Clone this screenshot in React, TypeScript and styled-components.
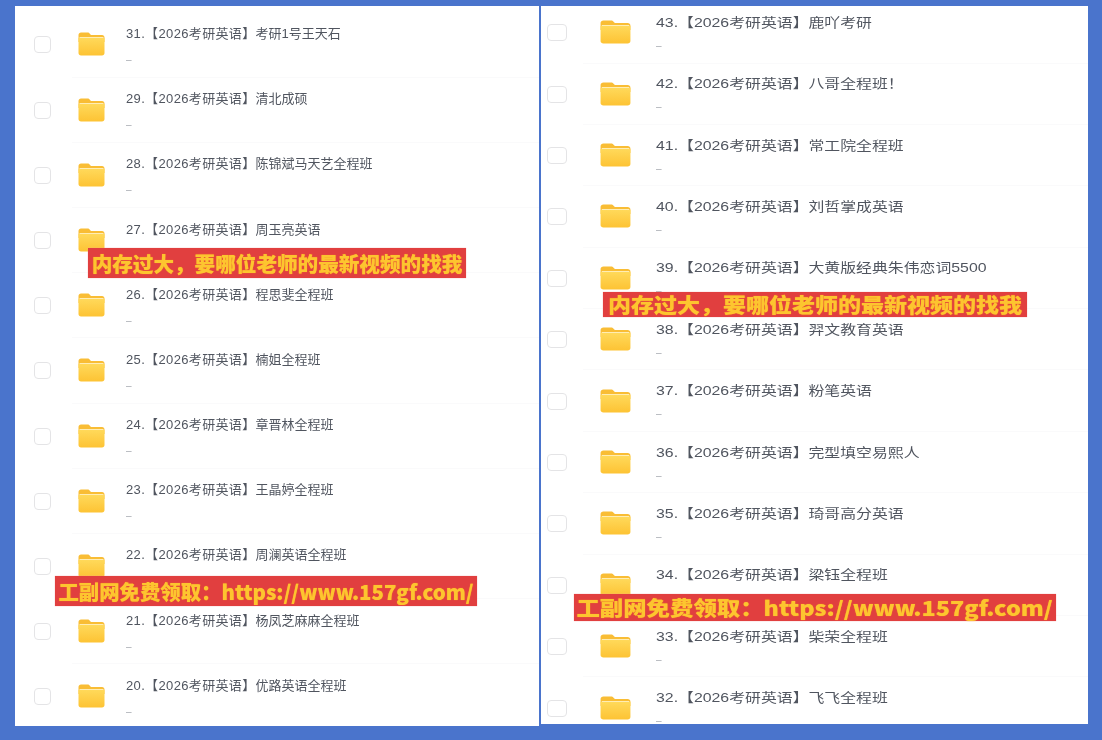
import React from "react";
import styled, { createGlobalStyle } from "styled-components";

const Global = createGlobalStyle`
  html, body { margin: 0; padding: 0; background: #4a74cc; }
  #root { width: 1102px; height: 740px; }
`;

const Page = styled.div`
  position: relative;
  width: 1102px;
  height: 740px;
  overflow: hidden;
  background: #4a74cc;
  display: flex;
  align-items: flex-start;
  gap: 2px;
  padding: 6px 0 0 15px;
  box-sizing: border-box;
  font-family: "Liberation Sans", "Noto Sans CJK SC", sans-serif;
`;

const Panel = styled.section<{ $wide?: boolean }>`
  width: ${(p) => (p.$wide ? 547 : 524)}px;
  height: ${(p) => (p.$wide ? 718 : 720)}px;
  background: #fff;
  overflow: hidden;
  flex: none;
`;

const List = styled.ul<{ $wide?: boolean }>`
  list-style: none;
  margin: ${(p) => (p.$wide ? "-3.9px" : "6.4px")} 0 0;
  padding: 0;
  filter: blur(0.55px);
`;

const Row = styled.li<{ $wide?: boolean }>`
  height: ${(p) => (p.$wide ? 61.4 : 65.2)}px;
  display: flex;
  align-items: center;
  padding-left: ${(p) => (p.$wide ? 6 : 19)}px;
  box-sizing: border-box;
`;

const Check = styled.span<{ $wide?: boolean }>`
  flex: none;
  width: ${(p) => (p.$wide ? 20 : 17)}px;
  height: 17px;
  border: 1px solid #e4e4e6;
  border-radius: 4px;
  box-sizing: border-box;
  background: #fff;
`;

const Body = styled.div<{ $wide?: boolean }>`
  flex: 1;
  height: 100%;
  margin-left: ${(p) => (p.$wide ? 16 : 21)}px;
  padding-left: ${(p) => (p.$wide ? 17 : 6)}px;
  display: flex;
  align-items: center;
  gap: ${(p) => (p.$wide ? 25 : 21)}px;
  border-bottom: 1px solid #fafafb;
  box-sizing: border-box;
`;

const FolderIcon = styled.svg<{ $wide?: boolean }>`
  flex: none;
  width: ${(p) => (p.$wide ? 31 : 27)}px;
  height: 24px;
`;

const Text = styled.div<{ $wide?: boolean }>`
  display: flex;
  flex-direction: column;
  gap: ${(p) => (p.$wide ? 5 : 8)}px;
  padding-top: ${(p) => (p.$wide ? 4 : 5)}px;
`;

const Title = styled.span<{ $wide?: boolean }>`
  display: block;
  height: 18px;
  line-height: 18px;
  font-size: 13px;
  color: #50555f;
  white-space: nowrap;
  transform-origin: left center;
  transform: scaleX(${(p) => (p.$wide ? 1.22 : 1)});
`;

const Prefix = styled.span<{ $wide?: boolean }>`
  letter-spacing: ${(p) => (p.$wide ? 0 : 0.35)}px;
`;

const Dash = styled.span`
  display: block;
  height: 18px;
  line-height: 18px;
  font-size: 10px;
  color: #a8abb2;
`;

const Banner = styled.div<{ $x: number; $y: number; $w: number; $h: number }>`
  position: absolute;
  left: ${(p) => p.$x}px;
  top: ${(p) => p.$y}px;
  width: ${(p) => p.$w}px;
  height: ${(p) => p.$h}px;
  background: #e13f3f;
  box-shadow: 0 0 1px #f0a0a0;
  display: flex;
  align-items: center;
  justify-content: center;
  filter: blur(0.4px);
`;

const BannerText = styled.span<{ $size: number; $stretch?: number }>`
  display: block;
  flex: none;
  font-family: "Noto Sans CJK SC", "Noto Sans", sans-serif;
  font-weight: 900;
  font-size: ${(p) => p.$size}px;
  line-height: 1;
  color: #fdc52f;
  text-shadow: 0 0 1px #f59a23;
  white-space: nowrap;
  transform: scaleX(${(p) => p.$stretch ?? 1});
`;

const Folder = ({ wide }: { wide?: boolean }) => (
  <FolderIcon $wide={wide} viewBox="0 0 27 24" preserveAspectRatio="none">
    <defs>
      <linearGradient id="folderFront" x1="0" y1="0" x2="0" y2="1">
        <stop offset="0" stopColor="#ffd95a" />
        <stop offset="1" stopColor="#fdc334" />
      </linearGradient>
    </defs>
    <path
      d="M0.5 3C0.5 1.6 1.6 0.5 3 0.5H9.5C10.6 0.5 11.2 1 12 1.9L13 3H24C25.5 3 26.5 4 26.5 5.5V10H0.5Z"
      fill="#f9bd35"
    />
    <path d="M1.5 5H25.5V6.2H1.5Z" fill="#ffedb4" />
    <path
      d="M0.5 6H26.5V21C26.5 22.6 25.5 23.5 24 23.5H3C1.5 23.5 0.5 22.6 0.5 21Z"
      fill="url(#folderFront)"
    />
  </FolderIcon>
);

type Item = [string, string];

const leftItems: Item[] = [
  ["31", "考研1号王天石"],
  ["29", "清北成硕"],
  ["28", "陈锦斌马天艺全程班"],
  ["27", "周玉亮英语"],
  ["26", "程思斐全程班"],
  ["25", "楠姐全程班"],
  ["24", "章晋林全程班"],
  ["23", "王晶婷全程班"],
  ["22", "周澜英语全程班"],
  ["21", "杨凤芝麻麻全程班"],
  ["20", "优路英语全程班"],
];

const rightItems: Item[] = [
  ["43", "鹿吖考研"],
  ["42", "八哥全程班！"],
  ["41", "常工院全程班"],
  ["40", "刘哲掌成英语"],
  ["39", "大黄版经典朱伟恋词5500"],
  ["38", "羿文教育英语"],
  ["37", "粉笔英语"],
  ["36", "完型填空易熙人"],
  ["35", "琦哥高分英语"],
  ["34", "梁钰全程班"],
  ["33", "柴荣全程班"],
  ["32", "飞飞全程班"],
];

const FileList = ({ items, wide }: { items: Item[]; wide?: boolean }) => (
  <Panel $wide={wide}>
    <List $wide={wide}>
      {items.map(([n, name]) => (
        <Row key={n} $wide={wide}>
          <Check $wide={wide} />
          <Body $wide={wide}>
            <Folder wide={wide} />
            <Text $wide={wide}>
              <Title $wide={wide}>
                <Prefix $wide={wide}>{`${n}.【2026考研英语】`}</Prefix>
                {name}
              </Title>
              <Dash>–</Dash>
            </Text>
          </Body>
        </Row>
      ))}
    </List>
  </Panel>
);

const MEMO = "内存过大，要哪位老师的最新视频的找我";
const LINK = "工副网免费领取：https://www.157gf.com/";

export default function App() {
  return (
    <Page>
      <Global />
      <FileList items={leftItems} />
      <FileList items={rightItems} wide />
      <Banner $x={88} $y={248} $w={378} $h={30}>
        <BannerText $size={20.6}>{MEMO}</BannerText>
      </Banner>
      <Banner $x={55} $y={576} $w={422} $h={30}>
        <BannerText $size={20.4}>{LINK}</BannerText>
      </Banner>
      <Banner $x={603} $y={292} $w={424} $h={25}>
        <BannerText $size={20} $stretch={1.15}>{MEMO}</BannerText>
      </Banner>
      <Banner $x={574} $y={594} $w={482} $h={27}>
        <BannerText $size={20} $stretch={1.17}>{LINK}</BannerText>
      </Banner>
    </Page>
  );
}
